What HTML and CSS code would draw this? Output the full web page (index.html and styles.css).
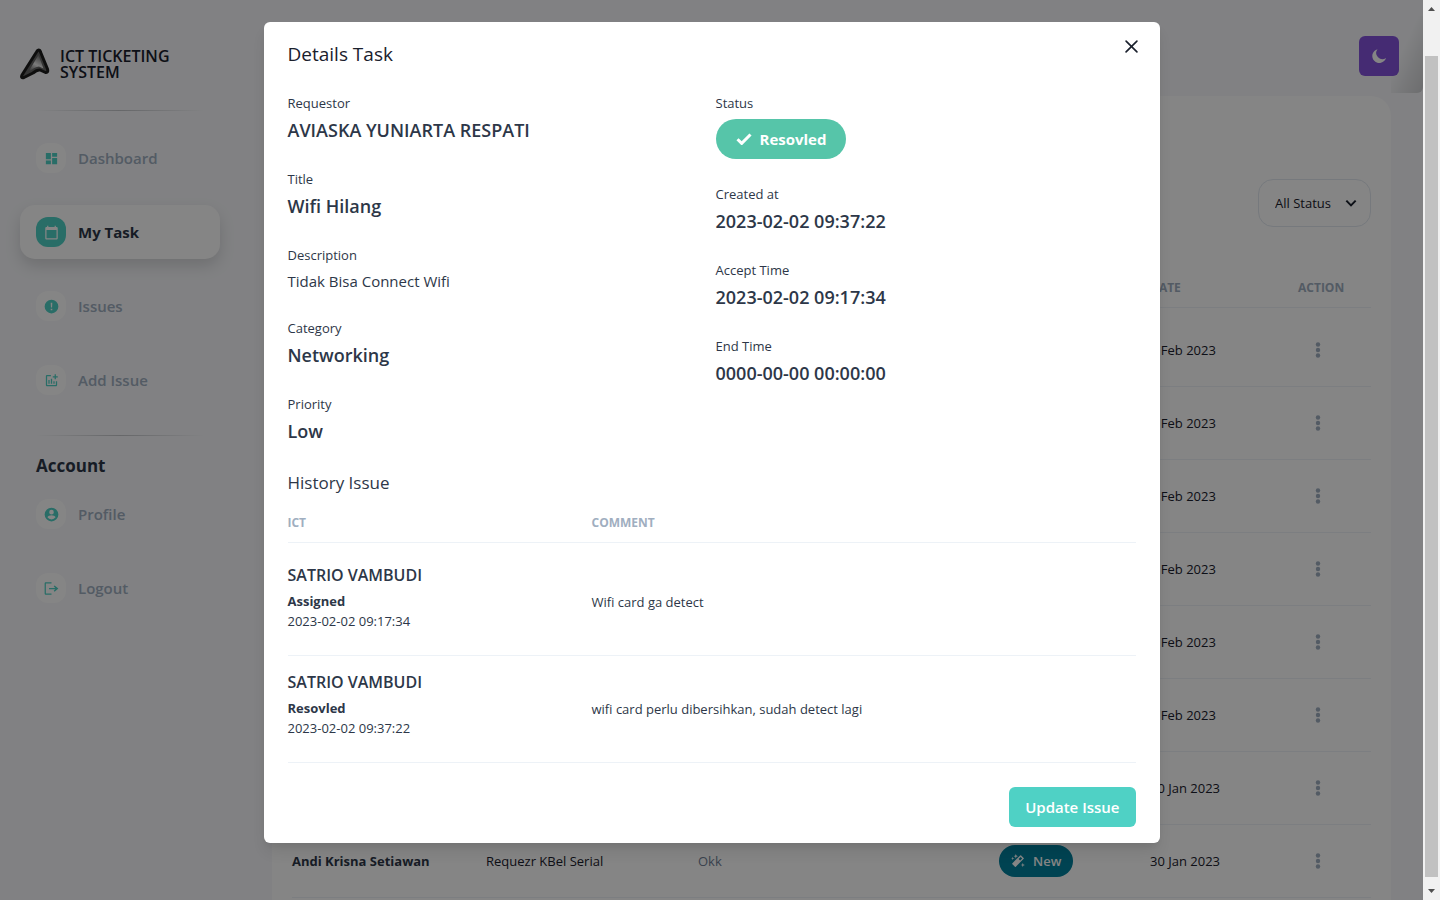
FILE: index.html
```html
<!DOCTYPE html>
<html lang="en">
<head>
<meta charset="utf-8">
<meta name="viewport" content="width=device-width, initial-scale=1">
<title>ICT Ticketing System</title>
<link rel="stylesheet" href="styles.css">
</head>
<body>
<div class="window">
  <div class="app">
    <aside class="sidebar">
      <div class="brand">
        <svg class="brand-logo" viewBox="0 0 30 32" aria-hidden="true">
          <defs>
            <linearGradient id="metal" x1="0.8" y1="0" x2="0.3" y2="1">
              <stop offset="0" stop-color="#666"/><stop offset="0.55" stop-color="#eee"/><stop offset="1" stop-color="#666"/>
            </linearGradient>
          </defs>
          <path d="M18.500 2 Q20 2 20.500 4 L27.500 21 Q28.500 25 25.500 24.500 L20 22 Q17 21.500 13 25 L4 29.500 Q0.500 30.500 2 27 L16.500 4 Q17.500 2 18.500 2 Z" fill="#666" stroke="#1c1c1c" stroke-width="3" stroke-linejoin="round"/>
          <path d="M18.500 7 L23.500 20.500 L19 18.500 Q15 18.500 8 24.500 Z" fill="url(#metal)"/>
        </svg>
        <span>ICT TICKETING SYSTEM</span>
      </div>
      <hr class="divider">
      <nav class="nav">
        <a class="nav-item" href="#"><span class="nav-icon"><svg viewBox="0 0 24 24"><path d="M3 13h8V3H3v10zm0 8h8v-6H3v6zm10 0h8V11h-8v10zm0-18v6h8V3h-8z"/></svg></span>Dashboard</a>
        <a class="nav-item active" href="#"><span class="nav-icon"><svg class="calendar" viewBox="0 0 24 24"><path d="M20 3h-1V1h-2v2H7V1H5v2H4c-1.100 0-2 .9-2 2v16c0 1.100.9 2 2 2h16c1.100 0 2-.9 2-2V5c0-1.100-.9-2-2-2zm0 18H4V8h16v13z"/></svg></span>My Task</a>
        <a class="nav-item" href="#"><span class="nav-icon"><svg viewBox="0 0 24 24"><path fill-rule="evenodd" d="M12 1a11 11 0 1 0 0 22 11 11 0 0 0 0-22zm-1.300 5h2.600l-.4 7.500h-1.800zm0 9.500h2.600V18h-2.600z"/></svg></span>Issues</a>
        <a class="nav-item" href="#"><span class="nav-icon"><svg viewBox="0 0 24 24"><path d="M22 5v2h-3v3h-2V7h-3V5h3V2h2v3h3zm-3 14H5V5h6V3H5c-1.100 0-2 .9-2 2v14c0 1.100.9 2 2 2h14c1.100 0 2-.9 2-2v-6h-2v6zm-4-6v4h2v-4h-2zm-4 4h2V9h-2v8zm-2 0v-6H7v6h2z"/></svg></span>Add Issue</a>
      </nav>
      <hr class="divider second">
      <h2 class="nav-title">Account</h2>
      <nav class="nav">
        <a class="nav-item" href="#"><span class="nav-icon"><svg viewBox="0 0 24 24"><path fill-rule="evenodd" d="M12 1a11 11 0 1 0 0 22 11 11 0 0 0 0-22zm0 3.500a3.700 3.700 0 1 1 0 7.400 3.700 3.700 0 0 1 0-7.400zM12 20a8 8 0 0 1-6.500-3.500c0-2.200 4.300-3.400 6.500-3.400s6.500 1.200 6.500 3.400A8 8 0 0 1 12 20z"/></svg></span>Profile</a>
        <a class="nav-item" href="#"><span class="nav-icon"><svg viewBox="0 0 24 24"><path d="M17 7l-1.500 1.500L18 11H8v2h10l-2.500 2.500L17 17l6-5zM3 4h9V2H3c-1.100 0-2 .9-2 2v16c0 1.100.9 2 2 2h9v-2H3V4z"/></svg></span>Logout</a>
      </nav>
    </aside>
    <main class="main">
      <header class="topbar">
        <button class="theme-button" type="button" aria-label="Toggle dark mode"><svg viewBox="0 0 16 16"><path d="M6.500 1.200A7 7 0 1 0 15 10 6.200 6.200 0 0 1 6.500 1.200z"/></svg></button>
      </header>
      <section class="card">
        <div class="filter">
          <select aria-label="Status filter"><option>All Status</option></select>
          <svg viewBox="0 0 24 24" aria-hidden="true"><path d="M5 8.500l7 7 7-7"/></svg>
        </div>
        <table class="tasks">
          <colgroup><col class="c-name"><col class="c-title"><col><col class="c-status"><col class="c-date"><col class="c-action"></colgroup>
          <thead><tr><th></th><th></th><th></th><th></th><th>DATE</th><th>ACTION</th></tr></thead>
          <tbody>
            <tr><td></td><td></td><td></td><td></td><td>2 Feb 2023</td><td><button class="more" type="button" aria-label="Actions"><svg viewBox="0 0 6 16"><circle cx="3" cy="2.500" r="2.200"/><circle cx="3" cy="8" r="2.200"/><circle cx="3" cy="13.500" r="2.200"/></svg></button></td></tr>
            <tr><td></td><td></td><td></td><td></td><td>2 Feb 2023</td><td><button class="more" type="button" aria-label="Actions"><svg viewBox="0 0 6 16"><circle cx="3" cy="2.500" r="2.200"/><circle cx="3" cy="8" r="2.200"/><circle cx="3" cy="13.500" r="2.200"/></svg></button></td></tr>
            <tr><td></td><td></td><td></td><td></td><td>2 Feb 2023</td><td><button class="more" type="button" aria-label="Actions"><svg viewBox="0 0 6 16"><circle cx="3" cy="2.500" r="2.200"/><circle cx="3" cy="8" r="2.200"/><circle cx="3" cy="13.500" r="2.200"/></svg></button></td></tr>
            <tr><td></td><td></td><td></td><td></td><td>2 Feb 2023</td><td><button class="more" type="button" aria-label="Actions"><svg viewBox="0 0 6 16"><circle cx="3" cy="2.500" r="2.200"/><circle cx="3" cy="8" r="2.200"/><circle cx="3" cy="13.500" r="2.200"/></svg></button></td></tr>
            <tr><td></td><td></td><td></td><td></td><td>2 Feb 2023</td><td><button class="more" type="button" aria-label="Actions"><svg viewBox="0 0 6 16"><circle cx="3" cy="2.500" r="2.200"/><circle cx="3" cy="8" r="2.200"/><circle cx="3" cy="13.500" r="2.200"/></svg></button></td></tr>
            <tr><td></td><td></td><td></td><td></td><td>2 Feb 2023</td><td><button class="more" type="button" aria-label="Actions"><svg viewBox="0 0 6 16"><circle cx="3" cy="2.500" r="2.200"/><circle cx="3" cy="8" r="2.200"/><circle cx="3" cy="13.500" r="2.200"/></svg></button></td></tr>
            <tr><td></td><td></td><td></td><td></td><td>30 Jan 2023</td><td><button class="more" type="button" aria-label="Actions"><svg viewBox="0 0 6 16"><circle cx="3" cy="2.500" r="2.200"/><circle cx="3" cy="8" r="2.200"/><circle cx="3" cy="13.500" r="2.200"/></svg></button></td></tr>
            <tr>
              <td class="name">Andi Krisna Setiawan</td><td>Requezr KBel Serial</td><td class="muted">Okk</td>
              <td><span class="tag"><svg viewBox="0 0 16 16" aria-hidden="true"><path fill-rule="evenodd" d="M11.600 1.600 14.500 4.500Q15 5 14.500 5.500L5.500 14.500Q5 15 4.500 14.500L1.600 11.600Q1 11 1.600 10.500L10.500 1.600Q11 1 11.600 1.600zM11 3.300 8.700 5.600 10.500 7.400 12.800 5.100z"/><path d="M5.500 0l.7 1.800L8 2.500l-1.800.7L5.500 5l-.7-1.800L3 2.500l1.800-.7zM2 3l.5 1.500L4 5l-1.500.5L2 7l-.5-1.500L0 5l1.500-.5zM13.500 10l.6 1.900 1.900.6-1.900.6-.6 1.900-.6-1.900-1.900-.6 1.900-.6z"/></svg>New</span></td>
              <td>30 Jan 2023</td><td><button class="more" type="button" aria-label="Actions"><svg viewBox="0 0 6 16"><circle cx="3" cy="2.500" r="2.200"/><circle cx="3" cy="8" r="2.200"/><circle cx="3" cy="13.500" r="2.200"/></svg></button></td>
            </tr>
          </tbody>
        </table>
      </section>
    </main>
    <div class="overlay">
      <div class="modal" role="dialog" aria-modal="true" aria-labelledby="modal-title">
        <h1 class="modal-title" id="modal-title">Details Task</h1>
        <button class="close" type="button" aria-label="Close"><svg viewBox="0 0 12 12"><path d="M1 1l10 10M11 1L1 11"/></svg></button>
        <div class="modal-body">
          <div class="details">
            <dl class="fields">
              <div><dt>Requestor</dt><dd>AVIASKA YUNIARTA RESPATI</dd></div>
              <div><dt>Title</dt><dd>Wifi Hilang</dd></div>
              <div><dt>Description</dt><dd class="plain">Tidak Bisa Connect Wifi</dd></div>
              <div><dt>Category</dt><dd>Networking</dd></div>
              <div><dt>Priority</dt><dd>Low</dd></div>
            </dl>
            <dl class="fields">
              <div><dt>Status</dt><dd class="status"><span class="badge"><svg viewBox="0 0 16 12" aria-hidden="true"><path d="M1.500 6.300l4.200 4.100L14.500 1.500"/></svg>Resovled</span></dd></div>
              <div><dt>Created at</dt><dd>2023-02-02 09:37:22</dd></div>
              <div><dt>Accept Time</dt><dd>2023-02-02 09:17:34</dd></div>
              <div><dt>End Time</dt><dd>0000-00-00 00:00:00</dd></div>
            </dl>
          </div>
          <h2 class="history-title">History Issue</h2>
          <table class="history">
            <colgroup><col class="c-ict"><col></colgroup>
            <thead><tr><th>ICT</th><th>COMMENT</th></tr></thead>
            <tbody>
              <tr><td><p class="person">SATRIO VAMBUDI</p><p class="state">Assigned</p><p>2023-02-02 09:17:34</p></td><td>Wifi card ga detect</td></tr>
              <tr><td><p class="person">SATRIO VAMBUDI</p><p class="state">Resovled</p><p>2023-02-02 09:37:22</p></td><td>wifi card perlu dibersihkan, sudah detect lagi</td></tr>
            </tbody>
          </table>
        </div>
        <footer class="modal-footer"><button class="primary" type="button">Update Issue</button></footer>
      </div>
    </div>
  </div>
  <div class="scrollbar" aria-hidden="true">
    <svg class="arrow" viewBox="0 0 17 17"><path d="M5 11h7L8.500 7z"/></svg>
    <div class="track"><div class="thumb"></div></div>
    <svg class="arrow" viewBox="0 0 17 17"><path d="M5 6h7L8.500 10z"/></svg>
  </div>
</div>
</body>
</html>
```

FILE: styles.css
```css
* { box-sizing: border-box; }
body, h1, h2, p, dl, dd { margin: 0; }
body {
  font-family: "Open Sans", "Noto Sans", sans-serif;
  font-size: 13px;
  color: #2d3748;
  background: #f7f8fb;
}
button, select { font: inherit; color: inherit; }
button { border: 0; padding: 0; cursor: pointer; }
table { width: 100%; border-collapse: collapse; table-layout: fixed; }
th, td { padding: 0; text-align: left; }

.window { display: flex; height: 100vh; overflow: hidden; }
.app { position: relative; flex: 1; min-width: 0; display: flex; overflow: hidden; }

.sidebar { flex: none; width: 240px; padding: 48px 20px 0; }
.brand {
  display: flex; align-items: center; gap: 10px;
  font-size: 16px; line-height: 16px; font-weight: 600; color: #1a202c;
}
.brand-logo { flex: none; width: 30px; height: 32px; }
.divider {
  height: 1px; margin: 30px 16px 20px; border: 0;
  background: linear-gradient(90deg, transparent, #c4c6ca, transparent);
}
.divider.second { margin: 28px 16px 16px; }
.nav { display: flex; flex-direction: column; gap: 20px; }
.nav-item {
  display: flex; align-items: center; gap: 12px; height: 54px; padding: 0 16px;
  border-radius: 15px; font-size: 15px; font-weight: 600; color: #a0aec0; text-decoration: none;
}
.nav-icon {
  display: flex; align-items: center; justify-content: center;
  width: 30px; height: 30px; border-radius: 12px; background: #fff;
}
.nav-icon svg { width: 15px; height: 15px; fill: #4fd1c5; }
.nav-item.active { background: #fff; color: #2d3748; font-weight: 700; box-shadow: 0 7px 16px rgba(0, 0, 0, .14); }
.active .nav-icon { background: #4fd1c5; }
.active .nav-icon svg { fill: #fff; }
.nav-title { margin: 0 16px 8px; font-size: 17px; line-height: 27px; font-weight: 700; }

.main { flex: 1; min-width: 0; padding: 0 32px; }
.topbar { position: relative; display: flex; justify-content: flex-end; height: 96px; padding-top: 36px; }
.topbar::after {
  content: ""; position: absolute; top: 16px; right: -32px; width: 32px; height: 77px;
  border-radius: 0 0 6px 0;
  background: linear-gradient(115deg, transparent 40%, rgba(0, 0, 0, .16));
}
.theme-button {
  display: flex; align-items: center; justify-content: center;
  width: 40px; height: 40px; margin-right: -8px; border-radius: 6px; background: #8554dd;
}
.theme-button svg { width: 16px; height: 16px; fill: #fff; }
.card { padding: 83px 20px 20px; border-radius: 20px; background: #fff; min-height: 900px; }
.filter { position: relative; width: 113px; margin-left: auto; }
.filter select {
  appearance: none; width: 100%; height: 48px; padding: 0 16px;
  border: 1px solid #e2e8f0; border-radius: 15px; background: transparent; color: #1a202c;
}
.filter svg {
  position: absolute; right: 12px; top: 16px; width: 16px; height: 16px;
  fill: none; stroke: #1a202c; stroke-width: 3; pointer-events: none;
}
.tasks { margin-top: 48px; }
.c-name { width: 194px; }
.c-title { width: 212px; }
.c-status { width: 151px; }
.c-date { width: 148px; }
.c-action { width: 73px; }
.tasks th { height: 32px; padding-bottom: 7px; vertical-align: middle; }
th { font-size: 12px; font-weight: 700; color: #a0aec0; }
.tasks tr { border-bottom: 1px solid #edf2f7; }
.tasks td { height: 73px; color: #1a202c; }
.tasks tbody tr:first-child td { height: 79px; padding-top: 7px; }
.tasks .name { font-weight: 700; color: #2d3748; }
.tasks .muted { color: #718096; }
.more { display: block; width: 40px; height: 24px; background: none; }
.more svg { display: block; width: 6px; height: 16px; margin: 0 auto; fill: #a0aec0; }
.tag {
  display: inline-flex; align-items: center; gap: 8px; height: 32px; padding: 0 12px;
  border-radius: 16px; background: #00809d; color: #fff; font-weight: 600;
}
.tag svg { width: 14px; height: 14px; fill: #fff; }

.overlay {
  position: absolute; inset: 0; display: flex; justify-content: center; align-items: flex-start;
  padding-top: 22px; background: rgba(0, 0, 0, .48);
}
.modal {
  position: relative; width: 896px; max-width: 100%; border-radius: 6px; background: #fff;
  box-shadow: 0 10px 15px -3px rgba(0, 0, 0, .1), 0 4px 6px -2px rgba(0, 0, 0, .05);
}
.modal-title { padding: 17px 24px 15px; font-size: 19px; line-height: 31px; font-weight: 500; color: #1a202c; }
.close {
  position: absolute; top: 8px; right: 12px; width: 32px; height: 32px;
  display: flex; align-items: center; justify-content: center; background: none; border-radius: 6px;
}
.close svg { width: 13px; height: 13px; fill: none; stroke: #1a202c; stroke-width: 1.5; stroke-linecap: round; }
.modal-body { padding: 8px 24px; }
.details { display: grid; grid-template-columns: 1fr 1fr; gap: 8px; }
.fields div { margin-bottom: 24px; }
dt { font-size: 13px; line-height: 21px; }
dd { margin-top: 3px; padding-bottom: 1px; font-size: 18px; line-height: 27px; font-weight: 600; }
dd.plain { font-size: 15px; line-height: 24px; font-weight: 400; }
dd.status { padding: 2px 0 1px; }
.badge {
  display: flex; align-items: center; gap: 8px; width: max-content; height: 40px; padding: 0 20px;
  border-radius: 20px; background: #56c5a9; color: #fff; font-size: 15px; font-weight: 700;
}
.badge svg { width: 16px; height: 12px; fill: none; stroke: #fff; stroke-width: 3; }
.history-title { margin-top: -8px; padding-top: 7px; font-size: 17px; line-height: 27px; font-weight: 400; }
.details + .history-title { margin-top: -1px; padding-top: 0; }
.c-ict { width: 304px; }
.history th { height: 46px; padding-top: 8px; vertical-align: middle; }
.history tr { border-bottom: 1px solid #edf2f7; }
.history td { height: 107px; padding: 14px 0 24px; line-height: 20px; }
.history td + td { padding: 0; }
.history tbody tr:first-child td { height: 113px; padding-top: 20px; }
.history tbody tr:first-child td + td { padding-top: 6px; }
.person { margin-bottom: 4px; font-size: 16px; line-height: 24px; font-weight: 600; }
.state { font-weight: 700; }
.modal-footer { display: flex; justify-content: flex-end; padding: 16px 24px; }
.primary { height: 40px; padding: 0 16px; border-radius: 6px; background: #4fd1c5; color: #fff; font-size: 15px; font-weight: 600; }

.scrollbar { flex: none; display: flex; flex-direction: column; width: 17px; background: #f1f1f1; }
.arrow { width: 17px; height: 17px; fill: #505050; }
.track { flex: 1; display: flex; flex-direction: column; padding: 39px 2px 6px; }
.thumb { flex: 1; background: #c1c1c1; }
```
